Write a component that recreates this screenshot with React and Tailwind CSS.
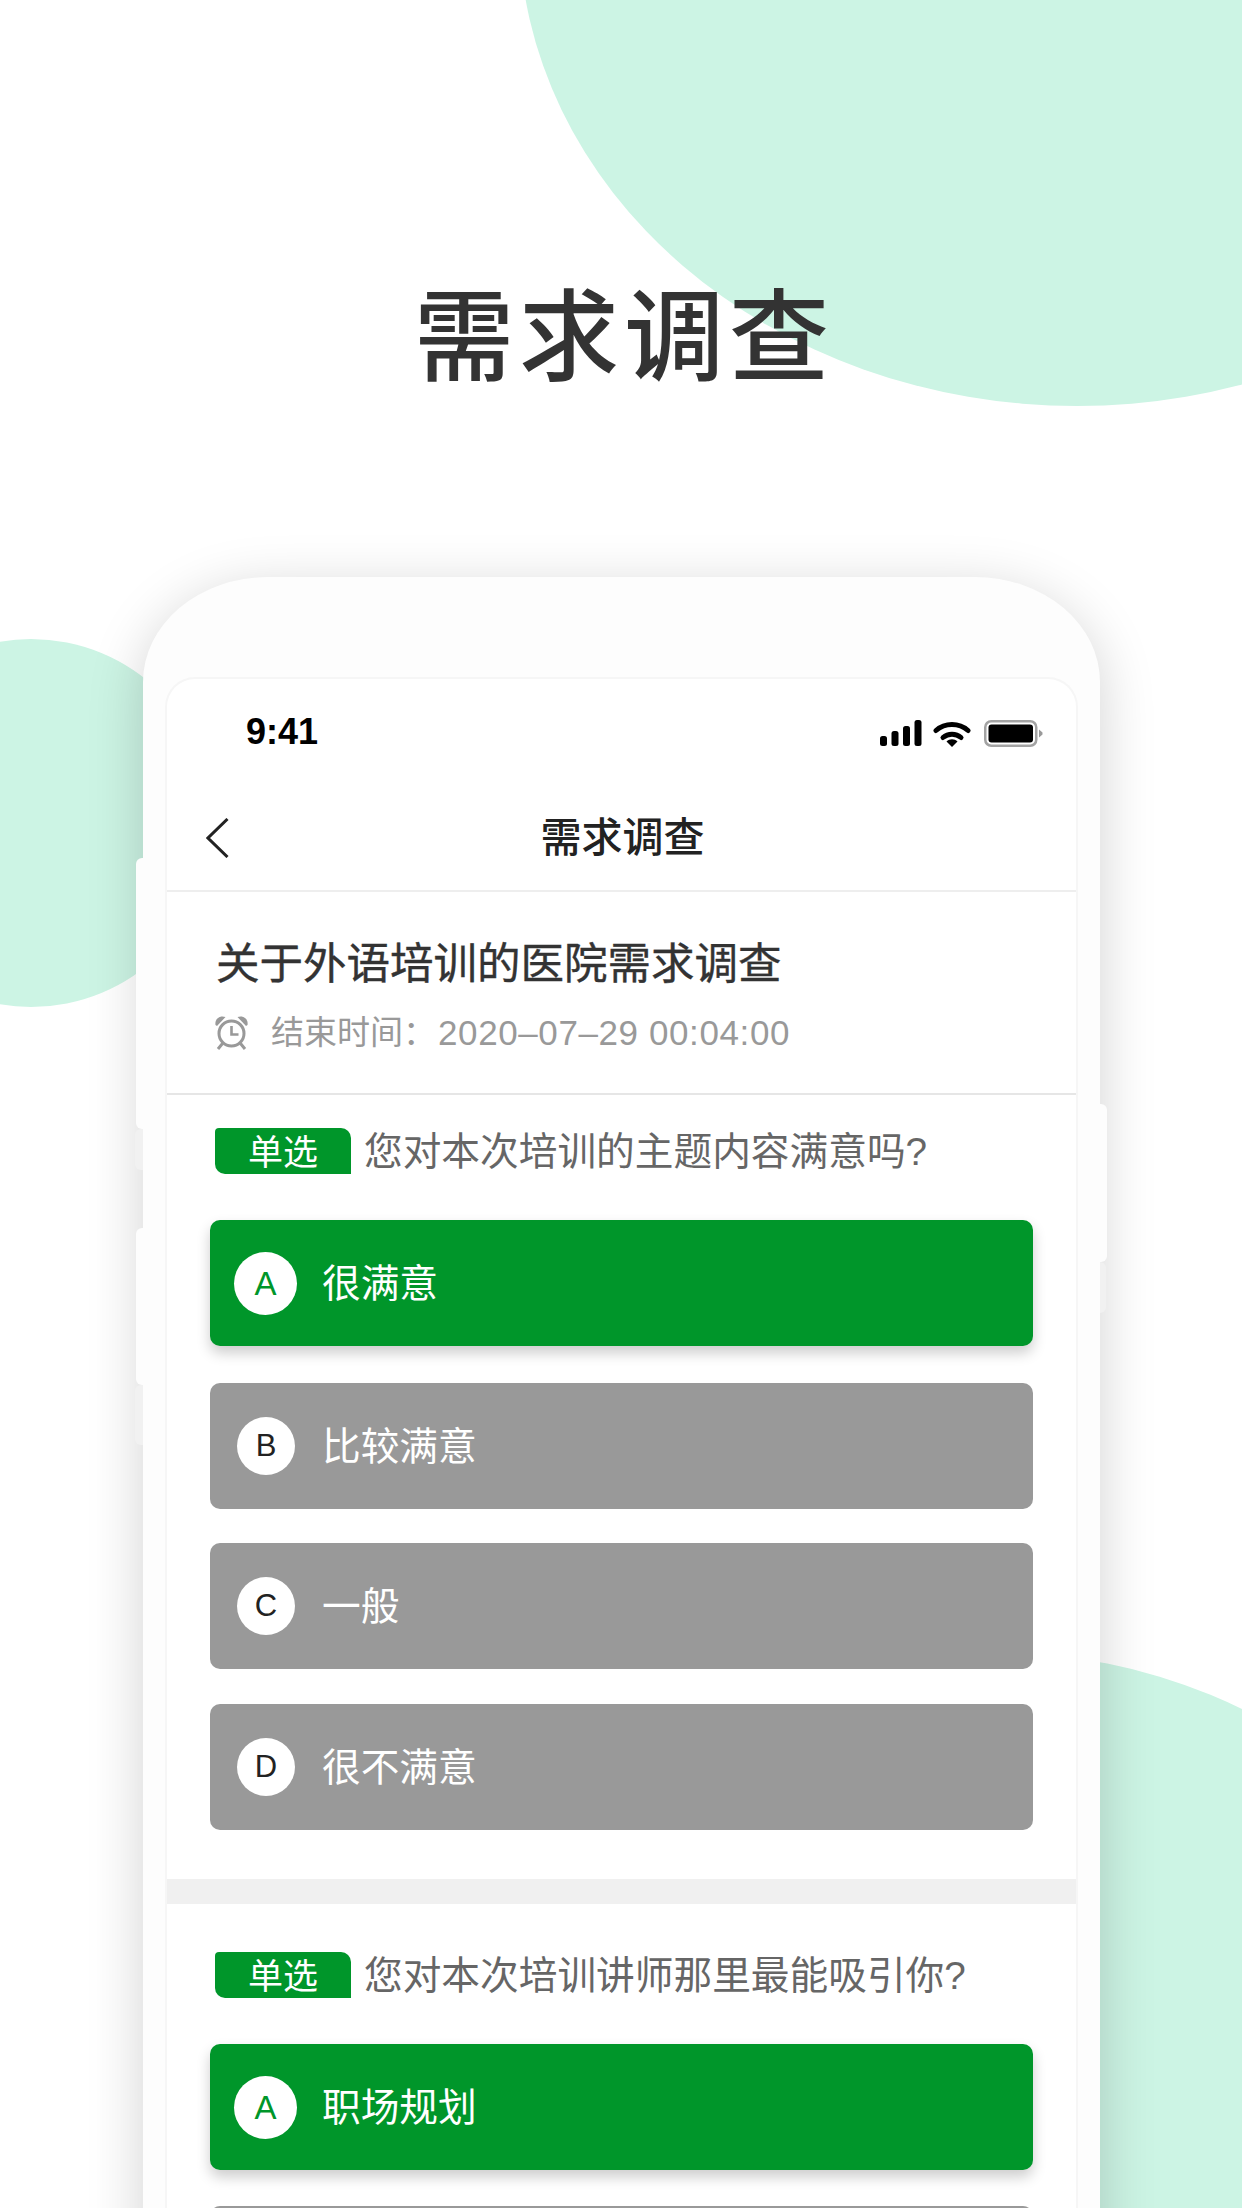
import React from "react";

function Signal() {
  return (
    <svg width="42" height="26" viewBox="0 0 42 26" fill="#000">
      <rect x="0" y="16" width="7" height="10" rx="2.5" />
      <rect x="11.5" y="11" width="7" height="15" rx="2.5" />
      <rect x="23" y="6" width="7" height="20" rx="2.5" />
      <rect x="34.5" y="0" width="7" height="26" rx="2.5" />
    </svg>
  );
}

function Wifi() {
  return (
    <svg width="38" height="27" viewBox="0 0 38 27" fill="none">
      <path d="M3 10.5C12 2.5 26 2.5 35 10.5" stroke="#000" strokeWidth="5" strokeLinecap="round" />
      <path d="M10 17.5C15 13 23 13 28 17.5" stroke="#000" strokeWidth="5" strokeLinecap="round" />
      <path d="M13.5 21.5C16.5 18.5 21.5 18.5 24.5 21.5L19 27Z" fill="#000" />
    </svg>
  );
}

function Battery() {
  return (
    <svg width="59" height="27" viewBox="0 0 59 27">
      <rect x="1.25" y="1.25" width="51" height="24.5" rx="6" fill="none" stroke="#a3a3a3" strokeWidth="2.5" />
      <rect x="4.5" y="4.5" width="44.5" height="18" rx="3" fill="#000" />
      <path d="M55 9.5L58.5 12.5V14.5L55 17.5Z" fill="#9a9a9a" />
    </svg>
  );
}

function Back() {
  return (
    <svg width="23" height="40" viewBox="0 0 23 40" fill="none">
      <path d="M21.5 1L2 20L21.5 39" stroke="#222" strokeWidth="3" />
    </svg>
  );
}

function Alarm() {
  return (
    <svg width="35" height="35" viewBox="0 0 34 35" fill="none" stroke="#999999">
      <circle cx="17" cy="18.5" r="12.5" strokeWidth="3" />
      <path d="M17 11V19.5H24" strokeWidth="2.6" />
      <path d="M1 10C0 4 5 0 11 2L2.5 11Z" fill="#999999" stroke="none" />
      <path d="M33 10C34 4 29 0 23 2L31.5 11Z" fill="#999999" stroke="none" />
      <path d="M8 28.5L3.5 34M26 28.5L30.5 34" strokeWidth="3" />
    </svg>
  );
}

function Option({ letter, text, active }) {
  return (
    <div
      className={
        active
          ? "flex h-[126px] items-center rounded-[10px] bg-[#00962a] pl-6 shadow-[0_7px_14px_rgba(0,0,0,0.2)]"
          : "flex h-[126px] items-center rounded-[10px] bg-[#999999] pl-[27px]"
      }
    >
      <div
        className={
          active
            ? "flex h-[63px] w-[63px] items-center justify-center rounded-full bg-white pt-px text-[33px] text-[#00962a]"
            : "flex h-[58px] w-[58px] items-center justify-center rounded-full bg-white pt-px text-[31px] text-[#222222]"
        }
      >
        {letter}
      </div>
      <span
        className={
          active
            ? "ml-[25px] pt-[3px] text-[38.7px] leading-none text-white"
            : "ml-[27px] pt-[3px] text-[38.7px] leading-none text-white"
        }
      >
        {text}
      </span>
    </div>
  );
}

function Question({ text }) {
  return (
    <div className="flex items-center pl-[48px]">
      <div className="flex h-[46px] w-[136px] items-center justify-center rounded-tl-[4px] rounded-tr-[10px] rounded-bl-[10px] bg-[#00962a] pt-[2px] text-[35px] leading-none text-white">
        单选
      </div>
      <div className="ml-[13px] pt-[3px] text-[38.7px] leading-none text-[#666666]">{text}</div>
    </div>
  );
}

export default function App() {
  return (
    <div className="relative flex h-[2208px] w-[1242px] flex-col overflow-hidden bg-white font-['Liberation_Sans','Noto_Sans_CJK_SC',sans-serif]">
      <div className="absolute left-[519px] top-[-554px] h-[960px] w-[1116px] rounded-[50%] bg-[#ccf4e4]" />
      <div className="absolute left-[-153px] top-[639px] h-[368px] w-[368px] rounded-full bg-[#ccf4e4]" />
      <div className="absolute left-[450px] top-[1653px] h-[1100px] w-[1100px] rounded-full bg-[#ccf4e4]" />

      <h1 className="relative pl-[6px] pt-[278px] text-center text-[100px] font-medium leading-[120px] tracking-[5px] text-[#333333]">
        需求调查
      </h1>

      <div className="relative ml-[143px] mt-[179px] flex w-[957px] flex-1 flex-col rounded-tl-[125px_105px] rounded-tr-[125px_105px] bg-[#fdfdfd] px-[22px] pt-[100px] shadow-[0_12px_55px_rgba(0,0,0,0.18)]">
        <div className="absolute left-[-7px] top-[281px] h-[271px] w-[7px] rounded-l-[6px] bg-[#fdfdfd]" />
        <div className="absolute left-[-8px] top-[552px] h-[41px] w-[8px] rounded-l-[6px] bg-[#f1f1f1]" />
        <div className="absolute left-[-7px] top-[651px] h-[157px] w-[7px] rounded-l-[6px] bg-[#fdfdfd]" />
        <div className="absolute left-[-8px] top-[808px] h-[60px] w-[8px] rounded-l-[6px] bg-[#f1f1f1]" />
        <div className="absolute right-[-7px] top-[527px] h-[158px] w-[7px] rounded-r-[6px] bg-[#fdfdfd]" />
        <div className="absolute right-[-6px] top-[685px] h-[51px] w-[6px] rounded-r-[6px] bg-[#f1f1f1]" />

        <div className="flex flex-1 flex-col rounded-t-[30px] border-x-2 border-t-2 border-[#f6f6f6] bg-white">
          <div className="flex h-[108px] items-center justify-between pl-[79px] pr-[33px]">
            <span className="pb-[2px] text-[36px] font-bold leading-none text-black">9:41</span>
            <div className="flex items-center gap-[13px]">
              <div className="flex items-center gap-[11px]">
                <Signal />
                <Wifi />
              </div>
              <Battery />
            </div>
          </div>

          <div className="relative flex h-[105px] items-center justify-center border-b-2 border-[#eeeeee] pb-[1px] pl-[2px]">
            <div className="absolute left-[39px] top-[31px]">
              <Back />
            </div>
            <span className="text-[41px] font-medium leading-none text-[#222222]">需求调查</span>
          </div>

          <div className="flex h-[203px] flex-col border-b-2 border-[#e6e6e6] pl-[49px] pt-[51px]">
            <div className="text-[43.5px] leading-none text-[#333333] [-webkit-text-stroke:0.4px_#333333]">
              关于外语培训的医院需求调查
            </div>
            <div className="mt-[28px] flex items-center text-[#999999]">
              <div className="ml-[-2px]">
                <Alarm />
              </div>
              <span className="ml-[22px] w-[167px] text-[33px] leading-none">结束时间：</span>
              <span className="text-[35px] leading-none tracking-[0.6px]">2020–07–29 00:04:00</span>
            </div>
          </div>

          <div className="pt-[33px]">
            <Question text="您对本次培训的主题内容满意吗?" />
            <div className="mt-[46px] flex flex-col px-[43px] pb-[49px]">
              <Option letter="A" text="很满意" active />
              <div className="h-[37px]" />
              <Option letter="B" text="比较满意" />
              <div className="h-[34px]" />
              <Option letter="C" text="一般" />
              <div className="h-[35px]" />
              <Option letter="D" text="很不满意" />
            </div>
          </div>

          <div className="h-[25px] bg-[#f0f0f0]" />

          <div className="pt-[48px]">
            <Question text="您对本次培训讲师那里最能吸引你?" />
            <div className="mt-[46px] flex flex-col gap-[36px] px-[43px]">
              <Option letter="A" text="职场规划" active />
              <div className="h-[126px] rounded-[10px] bg-[#999999]" />
            </div>
          </div>
        </div>
      </div>
    </div>
  );
}
